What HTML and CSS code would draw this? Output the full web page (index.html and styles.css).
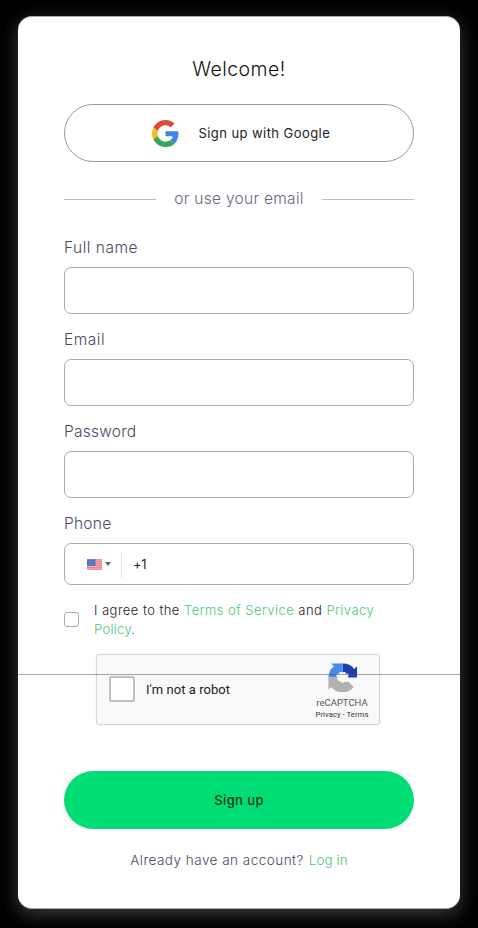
FILE: index.html
```html
<!DOCTYPE html>
<html lang="en">
<head>
<meta charset="utf-8">
<meta name="viewport" content="width=device-width, initial-scale=1">
<title>Sign up</title>
<link rel="stylesheet" href="styles.css">
</head>
<body>
<main class="card">
  <h1 class="title"><span>Welcome!</span></h1>
  <button class="google" type="button">
    <svg class="google-logo" viewBox="0 0 48 48" aria-hidden="true">
      <path fill="#db4a40" d="M24 9.5c3.54 0 6.71 1.22 9.21 3.6l6.85-6.85C35.9 2.38 30.47 0 24 0 14.62 0 6.51 5.38 2.56 13.22l7.98 6.19C12.43 13.72 17.74 9.5 24 9.5z"/>
      <path fill="#4583ea" d="M46.98 24.55c0-1.57-.15-3.09-.38-4.55H24v9.02h12.94c-.58 2.96-2.26 5.48-4.78 7.18l7.73 6c4.51-4.18 7.09-10.36 7.09-17.65z"/>
      <path fill="#f8bb15" d="M10.53 28.59A14.5 14.5 0 0 1 9.77 24c0-1.6.27-3.14.76-4.59l-7.98-6.19A23.9 23.9 0 0 0 0 24c0 3.88.92 7.54 2.56 10.78l7.97-6.19z"/>
      <path fill="#36a554" d="M24 48c6.48 0 11.93-2.13 15.89-5.81l-7.73-6c-2.15 1.45-4.92 2.3-8.16 2.3-6.26 0-11.57-4.22-13.47-9.91l-7.98 6.19C6.51 42.62 14.62 48 24 48z"/>
    </svg>
    <span class="google-text">Sign up with Google</span>
  </button>
  <div class="divider"><span class="divider-text">or use your email</span></div>

  <form class="form">
    <label class="label label-name" for="name"><span>Full name</span></label>
    <input class="input" id="name" type="text">
    <label class="label label-email" for="email"><span>Email</span></label>
    <input class="input" id="email" type="email">
    <label class="label label-password" for="password"><span>Password</span></label>
    <input class="input" id="password" type="password">
    <label class="label label-phone"><span>Phone</span></label>
    <div class="phone">
      <span class="country">
        <svg class="flag" viewBox="0 0 16 11" aria-hidden="true">
          <path fill="#f4bfc3" d="M0 0h16v11H0z"/>
          <path stroke="#e8707a" d="M0 .5h16M0 2.500h16M0 4.500h16M0 6.500h16M0 8.500h16M0 10.500h16"/>
          <path fill="#4a74c6" d="M0 0h9v7H0z"/>
          <path stroke="#86a4de" stroke-width=".6" stroke-dasharray="1 1" d="M2 2.500h6M2 4h6M2 5.500h6"/>
        </svg>
        <span class="caret"></span>
      </span>
      <span class="dial">+1</span>
    </div>
    <div class="terms">
      <span class="checkbox"></span>
      <p class="terms-text"><span class="terms-line">I agree to the <a>Terms of Service</a> and <a>Privacy</a></span><br><a>Policy</a>.</p>
    </div>
    <div class="captcha">
      <span class="captcha-box"></span>
      <span class="captcha-label">I'm not a robot</span>
      <div class="captcha-brand">
        <svg class="captcha-logo" viewBox="0 0 64 64" aria-hidden="true">
          <path fill="#1f3fab" d="M64 32V7l-6 6A32 32 0 0 0 32 1v20c2-3 8-2 7 3 6-3 9 5 4 8z"/>
          <path fill="#4a8af0" d="M32 1H7l6 6A32 32 0 0 0 1 32h20c-5-3-2-9 4-8-1-5 4-6 7-3z"/>
          <path fill="#b0b0b0" d="M1 32v27l6-6A32 32 0 0 0 57 53L44 40c-2 3-5 3-7 1-3 5-9 3-9-1-5 2-9-4-7-8z"/>
        </svg>
        <span class="captcha-name">reCAPTCHA</span>
        <span class="captcha-links">Privacy - Terms</span>
      </div>
    </div>
    <button class="submit" type="button"><span>Sign up</span></button>
  </form>
  <p class="login"><span class="login-text">Already have an account?</span><a class="login-link">Log in</a></p>
  <span class="seam"></span>
</main>
</body>
</html>
```
FILE: styles.css
```css
* { box-sizing: border-box; }
body {
  margin: 0;
  height: 928px;
  overflow: hidden;
  padding: 16px 18px 0;
  background: #000;
  font-family: Inter, "Open Sans", sans-serif;
  font-weight: 300;
  color: #222;
}
button { font-family: inherit; padding: 0; cursor: pointer; }
a { color: #4bc975; }
.card {
  position: relative;
  height: 893px;
  padding: 39px 46px 0;
  border: 1px solid #aaa;
  border-width: 1px 0;
  border-radius: 14px;
  background: #fff;
  box-shadow: 0 5px 18px rgba(255, 255, 255, .24);
}
.title {
  margin: 0;
  height: 48px;
  line-height: 26px;
  font-size: 19.500px;
  font-weight: 300;
  letter-spacing: .45px;
  text-align: center;
  color: #111;
}
.google {
  display: flex;
  align-items: center;
  width: 100%;
  height: 58px;
  padding-left: 86.500px;
  border: 1px solid #999;
  border-radius: 29px;
  background: #fff;
}
.google-logo { width: 27px; height: 27px; flex: none; }
.google-text {
  margin-left: 20px;
  font-size: 13px;
  font-weight: 400;
  letter-spacing: .43px;
  color: #222;
  white-space: nowrap;
}
.divider {
  display: flex;
  align-items: center;
  justify-content: center;
  gap: 18.5px;
  height: 24px;
  margin-top: 25px;
  font-size: 15.500px;
  letter-spacing: .3px;
  color: #6b687c;
}
.divider::before, .divider::after { content: ""; flex: 1; height: 1px; background: #bbb; }
.divider-text { margin-top: -1px; white-space: nowrap; }
.form { margin-top: 24px; }
.label {
  display: block;
  height: 32px;
  line-height: 26px;
  font-size: 15.500px;
  letter-spacing: .25px;
  color: #4b4960;
}
.label-name { letter-spacing: .5px; }
.label-email { letter-spacing: .5px; }
.input {
  display: block;
  width: 100%;
  height: 47px;
  margin: 0 0 13px;
  padding: 0 16px;
  border: 1px solid #aaaab0;
  border-radius: 7px;
  background: #fff;
  font: inherit;
}
.phone {
  display: flex;
  align-items: center;
  height: 42px;
  padding-left: 22px;
  border: 1px solid #aaaab0;
  border-radius: 7px;
}
.country {
  display: flex;
  align-items: center;
  gap: 3px;
  width: 35px;
  height: 27px;
  border-right: 1px solid #e2e2e2;
}
.flag { width: 15px; height: 11px; margin-top: 1px; }
.caret {
  border: 3px solid transparent;
  border-top: 4px solid #666;
  border-bottom: 0;
}
.dial { margin-left: 11px; font-size: 13px; font-weight: 400; letter-spacing: -.3px; }
.terms { display: flex; height: 69px; padding-top: 16px; }
.checkbox {
  flex: none;
  width: 15px;
  height: 15px;
  margin-top: 11px;
  border: 1px solid #aaaab5;
  border-radius: 3px;
}
.terms-text {
  margin: 0 0 0 15px;
  font-size: 13px;
  line-height: 19px;
  letter-spacing: .3px;
  white-space: nowrap;
}
.terms-line { letter-spacing: .46px; }
.captcha {
  display: flex;
  align-items: center;
  width: 284px;
  height: 71px;
  margin-left: 32px;
  padding-left: 12px;
  border: 1px solid #d6d6d6;
  border-radius: 3px;
  background: #f9f9f9;
  box-shadow: 0 0 3px rgba(0, 0, 0, .08);
  font-family: Roboto, sans-serif;
  font-weight: 400;
}
.captcha-box {
  flex: none;
  width: 26px;
  height: 26px;
  margin-top: -2px;
  border: 2px solid #c1c1c1;
  border-radius: 2px;
  background: #fff;
}
.captcha-label { width: 159px; margin-left: 11px; font-size: 13px; letter-spacing: .05px; white-space: nowrap; }
.captcha-brand {
  display: flex;
  flex-direction: column;
  align-items: center;
  width: 74px;
  color: #555;
  white-space: nowrap;
}
.captcha-logo { width: 29px; height: 29px; margin-top: 3px; }
.captcha-name { margin-top: 5px; font-size: 9.500px; line-height: 12px; }
.captcha-links { font-size: 7.800px; line-height: 11px; color: #333; }
.submit {
  display: block;
  width: 100%;
  height: 58px;
  margin-top: 46px;
  border: 0;
  border-radius: 29px;
  background: #02dc74;
  color: #143b1a;
  font-size: 13px;
  font-weight: 500;
  letter-spacing: .4px;
}
.login {
  display: flex;
  justify-content: center;
  gap: 5px;
  margin: 21px 0 0;
  font-size: 13.500px;
  line-height: 20px;
  letter-spacing: .48px;
  color: #4b4960;
}
.login-link { letter-spacing: .05px; }
.seam {
  position: absolute;
  left: 0;
  right: 0;
  top: 657px;
  height: 1px;
  background: rgba(80, 80, 80, .5);
}
```
